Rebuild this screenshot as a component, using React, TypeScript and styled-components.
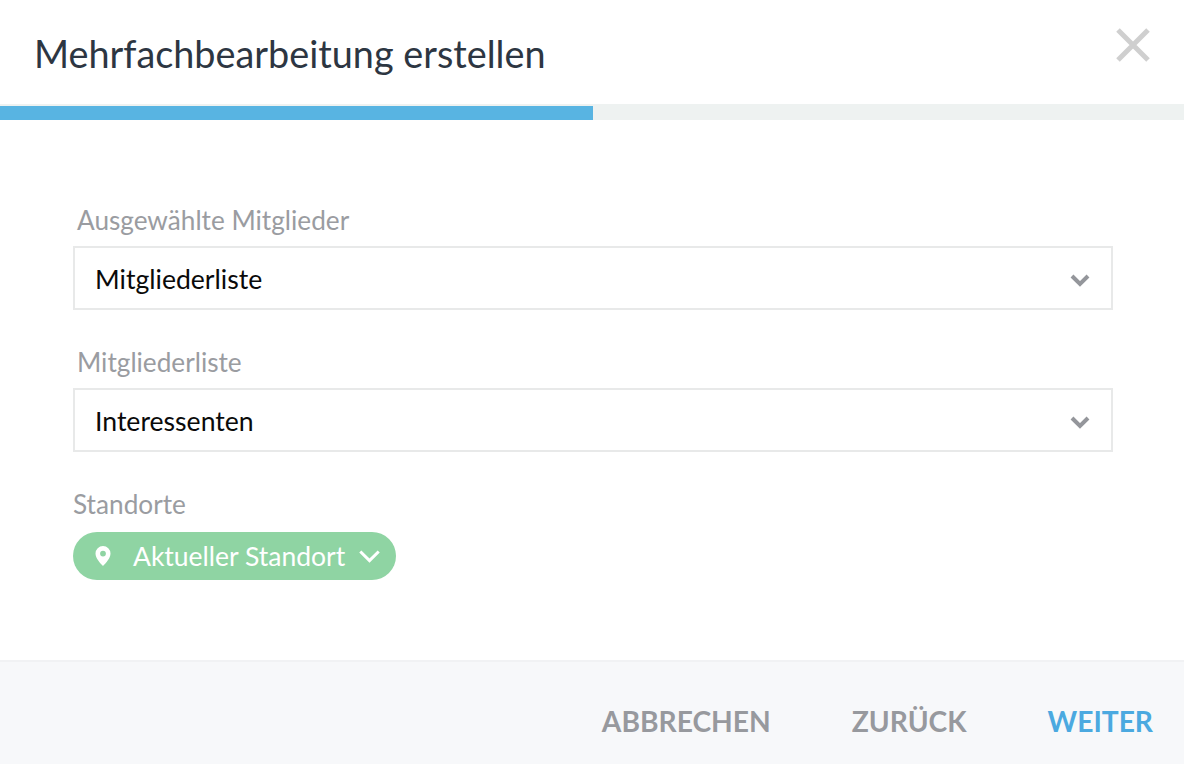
import React from 'react';
import styled, { createGlobalStyle } from 'styled-components';

const Global = createGlobalStyle`
  html, body { margin: 0; padding: 0; background: #fff; }
  body { font-family: "Lato", "Liberation Sans", sans-serif; }
`;

const Page = styled.div`
  width: 1184px;
  height: 764px;
  display: flex;
  flex-direction: column;
  overflow: hidden;
`;

const Header = styled.header`
  height: 104px;
  display: flex;
  justify-content: space-between;
  padding: 0 34px;
  box-sizing: border-box;
`;

const Title = styled.h1`
  margin: 32px 0 0;
  font-size: 37.8px;
  line-height: 44px;
  font-weight: 400;
  color: #2d3642;
`;

const CloseButton = styled.button`
  border: 0;
  padding: 0;
  margin: 28px 0 0;
  width: 34px;
  height: 34px;
  background: none;
  display: flex;
`;

const Track = styled.div`
  height: 16px;
  background: #eef2f1;
  display: flex;
  align-items: flex-end;
`;

const Fill = styled.div`
  height: 14px;
  width: 593px;
  background: #58b4e2;
`;

const Body = styled.main`
  flex: 1;
  padding: 84px 71px 0 73px;
`;

const Field = styled.div`
  margin-bottom: 36px;
`;

const Label = styled.label<{ $inset?: boolean; $tight?: boolean }>`
  display: block;
  font-size: 26.2px;
  line-height: 32px;
  color: #9a9ca1;
  margin: 0 0 ${(p) => (p.$tight ? '12px' : '10px')} ${(p) => (p.$inset ? '4px' : '0')};
`;

const Select = styled.div`
  height: 64px;
  box-sizing: border-box;
  border: 2px solid #e8e9e9;
  padding: 1px 21px 0 20px;
  display: flex;
  align-items: center;
  justify-content: space-between;
  font-size: 26.6px;
  color: #0a0a0a;
`;

const SelectIcon = styled.span`
  display: flex;
  margin-top: 2px;
`;

const Pill = styled.div`
  display: inline-flex;
  align-items: center;
  height: 48px;
  width: 323px;
  box-sizing: border-box;
  padding: 0 15px 0 21px;
  border-radius: 24px;
  background: #8fd4a3;
  color: #fff;
  font-size: 26.5px;
`;

const PillText = styled.span`
  margin-left: 21px;
  flex: 1;
  white-space: nowrap;
`;

const Footer = styled.footer`
  height: 104px;
  box-sizing: border-box;
  border-top: 2px solid #f1f2f4;
  background: #f7f8fa;
  display: flex;
  align-items: center;
  justify-content: flex-end;
  gap: 81px;
  padding: 16px 31px 0 0;
`;

const Action = styled.button<{ $primary?: boolean }>`
  border: 0;
  padding: 0;
  background: none;
  font-family: inherit;
  font-size: 28.2px;
  font-weight: 700;
  color: ${(p) => (p.$primary ? '#4ba9e0' : '#97999e')};
`;

const Chevron = ({ color, width, size }: { color: string; width: number; size: number }) => (
  <svg width={size} height={size * 0.7} viewBox="0 0 20 14" fill="none">
    <path d="M2 3l8 8 8-8" stroke={color} strokeWidth={width} />
  </svg>
);

const Pin = () => (
  <svg width="18" height="22" viewBox="0 0 18 22">
    <path
      fillRule="evenodd"
      fill="#fff"
      d="M9 1a7.500 7.500 0 0 0-7.500 7.500C1.500 13 6 18 9 21c3-3 7.500-8 7.500-12.500A7.500 7.500 0 0 0 9 1zm0 4.700a2.900 2.900 0 1 1 0 5.800 2.900 2.900 0 0 1 0-5.800z"
    />
  </svg>
);

export default function App() {
  return (
    <Page>
      <Global />
      <Header>
        <Title>Mehrfachbearbeitung erstellen</Title>
        <CloseButton>
          <svg width="34" height="34" viewBox="0 0 34 34">
            <path d="M2 2l30 30M32 2L2 32" stroke="#cfcfcf" strokeWidth="5" />
          </svg>
        </CloseButton>
      </Header>
      <Track>
        <Fill />
      </Track>
      <Body>
        <Field>
          <Label $inset>Ausgewählte Mitglieder</Label>
          <Select>
            Mitgliederliste
            <SelectIcon>
              <Chevron color="#94969b" width={4} size={20} />
            </SelectIcon>
          </Select>
        </Field>
        <Field>
          <Label $inset>Mitgliederliste</Label>
          <Select>
            Interessenten
            <SelectIcon>
              <Chevron color="#94969b" width={4} size={20} />
            </SelectIcon>
          </Select>
        </Field>
        <Label $tight>Standorte</Label>
        <Pill>
          <Pin />
          <PillText>Aktueller Standort</PillText>
          <Chevron color="#fff" width={2.6} size={23} />
        </Pill>
      </Body>
      <Footer>
        <Action>ABBRECHEN</Action>
        <Action>ZURÜCK</Action>
        <Action $primary>WEITER</Action>
      </Footer>
    </Page>
  );
}
